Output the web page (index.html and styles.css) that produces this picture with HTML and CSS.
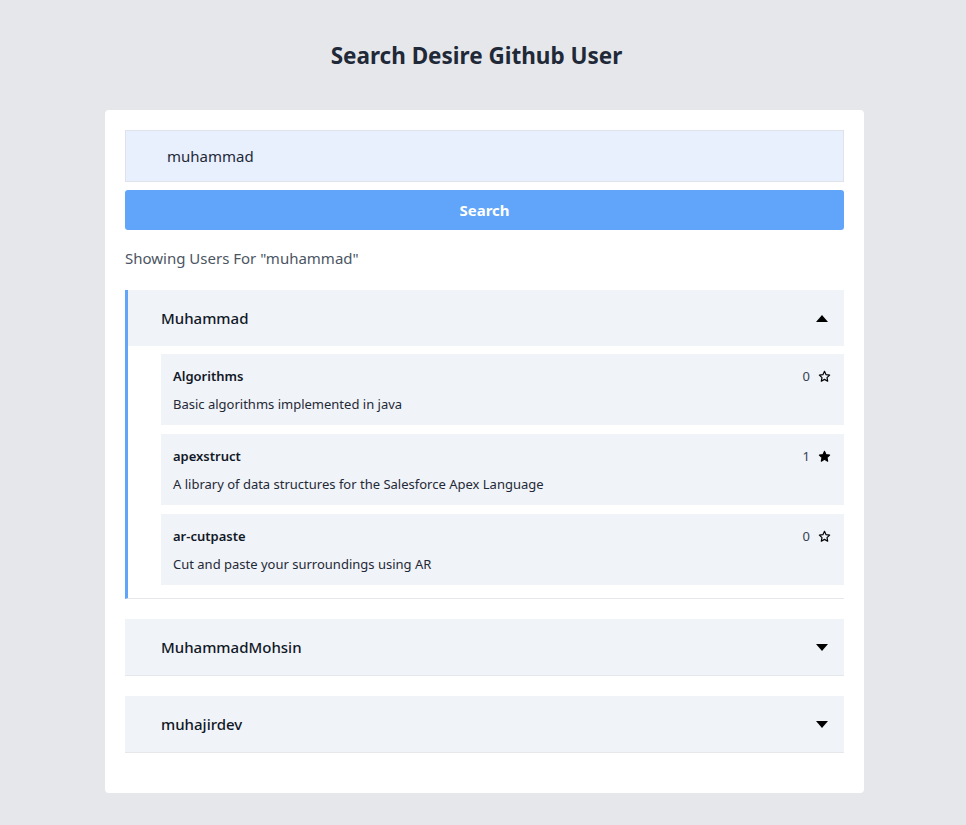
FILE: index.html
```html
<!DOCTYPE html>
<html lang="en">
<head>
<meta charset="utf-8">
<title>Search Desire Github User</title>
<link rel="stylesheet" href="styles.css">
</head>
<body>
<header class="top">
  <h1 class="title">Search Desire Github User</h1>
</header>
<main class="card">
  <form class="search" onsubmit="return false">
    <input class="search-input" type="text" value="muhammad">
    <button class="search-btn" type="submit">Search</button>
  </form>
  <p class="showing">Showing Users For "muhammad"</p>
  <div class="users">
    <section class="user open">
      <div class="user-head">
        <span class="user-name">Muhammad</span>
        <svg class="caret" width="12" height="7" viewBox="0 0 12 7"><path d="M0 7 L6 0 L12 7 Z" fill="#000"/></svg>
      </div>
      <div class="repos">
        <div class="repo">
          <div class="repo-top">
            <span class="repo-name">Algorithms</span>
            <span class="stars">0
              <svg class="star" width="13" height="13" viewBox="0 0 24 24"><path d="M12 2.5l2.9 6.1 6.6.8-4.9 4.6 1.3 6.6L12 17.3l-5.9 3.3 1.3-6.6L2.5 9.4l6.6-.8z" fill="none" stroke="#000" stroke-width="2.2" stroke-linejoin="round"/></svg>
            </span>
          </div>
          <p class="repo-desc">Basic algorithms implemented in java</p>
        </div>
        <div class="repo">
          <div class="repo-top">
            <span class="repo-name">apexstruct</span>
            <span class="stars">1
              <svg class="star" width="13" height="13" viewBox="0 0 24 24"><path d="M12 2.5l2.9 6.1 6.6.8-4.9 4.6 1.3 6.6L12 17.3l-5.9 3.3 1.3-6.6L2.5 9.4l6.6-.8z" fill="#000" stroke="#000" stroke-width="2" stroke-linejoin="round"/></svg>
            </span>
          </div>
          <p class="repo-desc">A library of data structures for the Salesforce Apex Language</p>
        </div>
        <div class="repo">
          <div class="repo-top">
            <span class="repo-name">ar-cutpaste</span>
            <span class="stars">0
              <svg class="star" width="13" height="13" viewBox="0 0 24 24"><path d="M12 2.5l2.9 6.1 6.6.8-4.9 4.6 1.3 6.6L12 17.3l-5.9 3.3 1.3-6.6L2.5 9.4l6.6-.8z" fill="none" stroke="#000" stroke-width="2.2" stroke-linejoin="round"/></svg>
            </span>
          </div>
          <p class="repo-desc">Cut and paste your surroundings using AR</p>
        </div>
      </div>
    </section>
    <section class="user">
      <div class="user-head">
        <span class="user-name">MuhammadMohsin</span>
        <svg class="caret" width="12" height="7" viewBox="0 0 12 7"><path d="M0 0 L6 7 L12 0 Z" fill="#000"/></svg>
      </div>
    </section>
    <section class="user">
      <div class="user-head">
        <span class="user-name">muhajirdev</span>
        <svg class="caret" width="12" height="7" viewBox="0 0 12 7"><path d="M0 0 L6 7 L12 0 Z" fill="#000"/></svg>
      </div>
    </section>
  </div>
</main>
</body>
</html>
```
FILE: styles.css
```css
* { box-sizing: border-box; }
body {
  margin: 0;
  background: #e5e7eb;
  font-family: "Noto Sans", "Open Sans", sans-serif;
  color: #1f2937;
}
.top {
  padding-top: 39px;
  padding-bottom: 38px;
  padding-right: 13px;
  text-align: center;
}
.title {
  margin: 0;
  font-size: 22.5px;
  line-height: 33px;
  font-weight: 700;
  color: #1f2937;
}
.card {
  width: 759px;
  margin-left: 105px;
  background: #fff;
  border-radius: 4px;
  padding: 20px 20px 40px;
}
.search {
  display: flex;
  flex-direction: column;
  gap: 8px;
}
.search-input {
  height: 52px;
  background: #e8f0fe;
  border: 1px solid #dfe2ea;
  padding: 0 0 0 41px;
  font: inherit;
  font-size: 15px;
  color: #1f2937;
  outline: none;
}
.search-btn {
  height: 40px;
  background: #60a5fa;
  border: none;
  border-radius: 3px;
  color: #fff;
  font: inherit;
  font-size: 15px;
  font-weight: 700;
}
.showing {
  margin: 16px 0 20px;
  font-size: 15px;
  line-height: 24px;
  color: #4b5563;
}
.users {
  display: flex;
  flex-direction: column;
  gap: 20px;
}
.user {
  border-bottom: 1px solid #e5e7eb;
}
.user.open {
  border-left: 3px solid #60a5fa;
}
.user-head {
  height: 56px;
  background: #f0f3f8;
  display: flex;
  align-items: center;
  justify-content: space-between;
  padding: 0 16px 0 36px;
}
.user.open .user-head {
  padding-left: 33px;
}
.user-name {
  font-size: 15px;
  font-weight: 500;
  color: #111827;
}
.caret { display: block; }
.repos {
  display: flex;
  flex-direction: column;
  gap: 9px;
  padding: 8px 0 13px 33px;
}
.repo {
  background: #f0f3f8;
  padding: 13px 13px 12px 12px;
}
.repo-top {
  display: flex;
  justify-content: space-between;
  align-items: center;
  height: 18px;
}
.repo-name {
  font-size: 13px;
  font-weight: 600;
  color: #111827;
}
.stars {
  display: flex;
  align-items: center;
  gap: 8px;
  font-size: 13px;
  color: #374151;
}
.star { display: block; }
.repo-desc {
  margin: 10px 0 0;
  font-size: 13px;
  line-height: 18px;
  color: #1f2937;
}
```
